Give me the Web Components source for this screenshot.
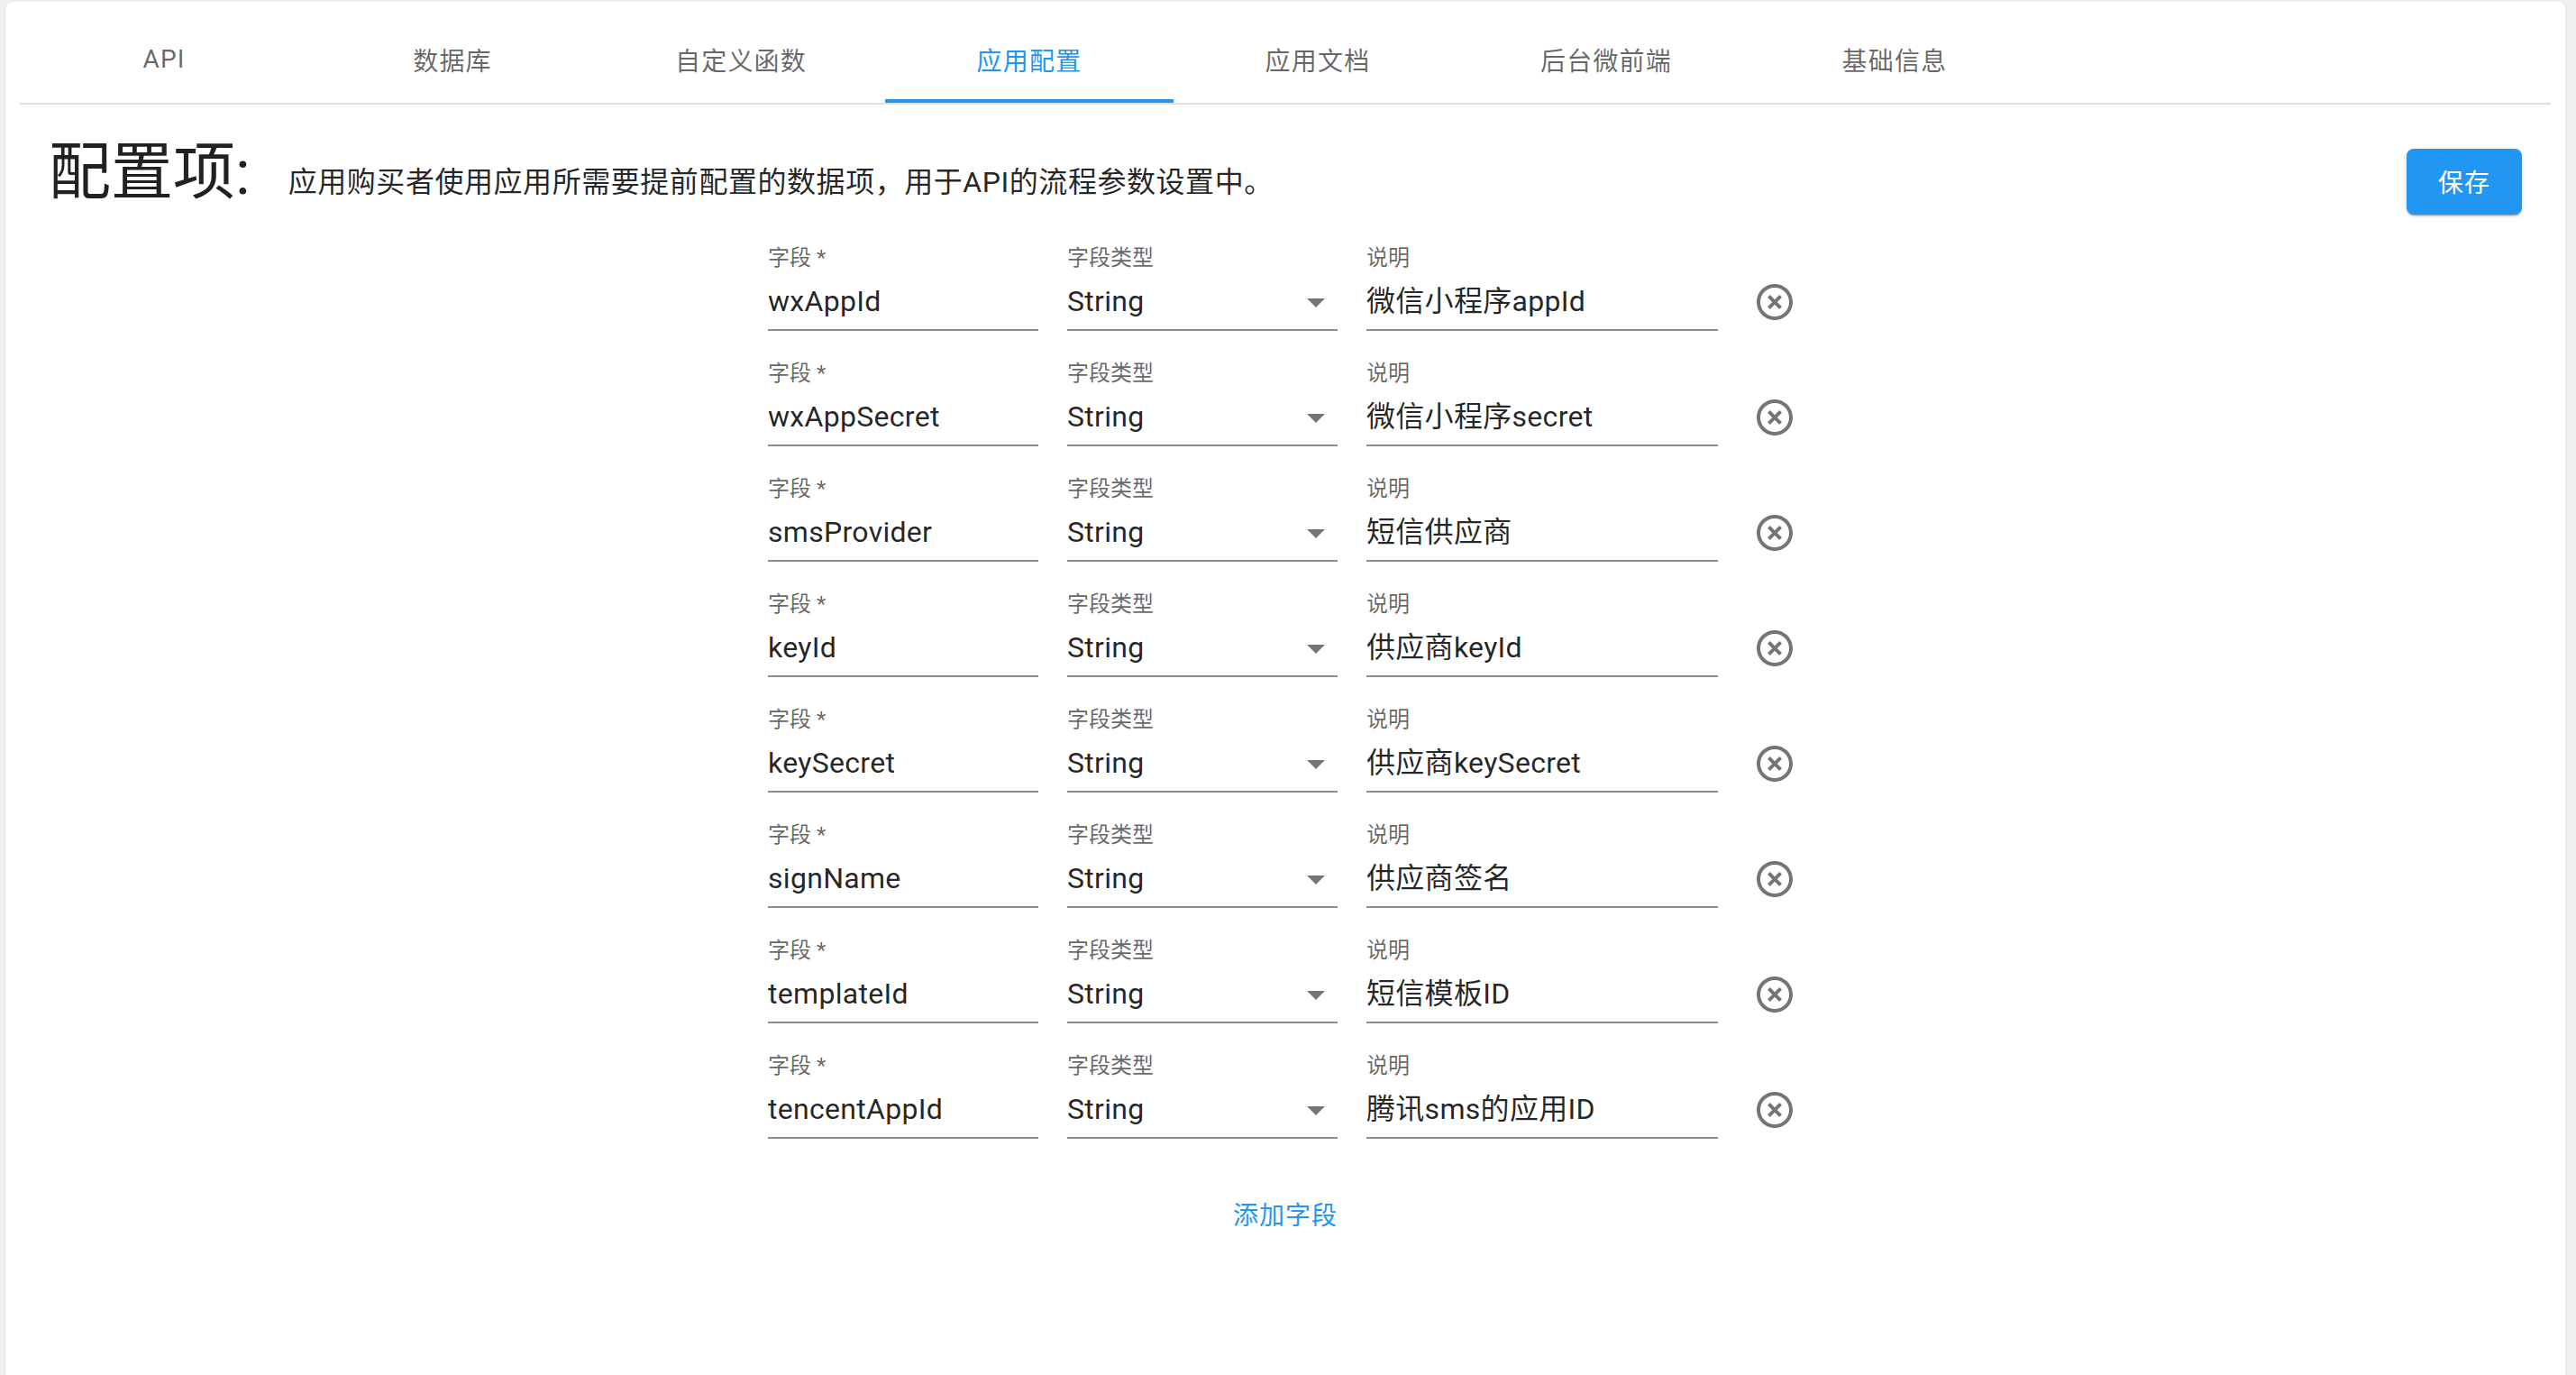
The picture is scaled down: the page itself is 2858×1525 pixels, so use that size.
<!DOCTYPE html>
<html lang="zh">
<head>
<meta charset="utf-8">
<title>应用配置</title>
<style>
  html, body { margin: 0; height: 100%; background: #f0f0f0; }
  body { font-family: Roboto, "Noto Sans CJK SC", sans-serif; }
</style>
</head>
<body>
<app-card>
  <tab-bar>
    <tab-item>API</tab-item>
    <tab-item>数据库</tab-item>
    <tab-item>自定义函数</tab-item>
    <tab-item active>应用配置</tab-item>
    <tab-item>应用文档</tab-item>
    <tab-item>后台微前端</tab-item>
    <tab-item>基础信息</tab-item>
  </tab-bar>
  <config-header>
    <span slot="title">配置项:</span>
    <span slot="desc">应用购买者使用应用所需要提前配置的数据项，用于API的流程参数设置中。</span>
    <save-button slot="action">保存</save-button>
  </config-header>
  <config-form id="form"></config-form>
</app-card>

<script>
// Field rows shown in the form.
const rows = [
  ['wxAppId', '微信小程序appId'],
  ['wxAppSecret', '微信小程序secret'],
  ['smsProvider', '短信供应商'],
  ['keyId', '供应商keyId'],
  ['keySecret', '供应商keySecret'],
  ['signName', '供应商签名'],
  ['templateId', '短信模板ID'],
  ['tencentAppId', '腾讯sms的应用ID']
]

/**
 * Small helper, defines an element with a static shadow template.
 *
 * @param {string} name - Tag name.
 * @param {string} html - Shadow markup.
 */
function define (name, html) {
  const template = document.createElement('template')
  template.innerHTML = html
  customElements.define(name, class extends HTMLElement {
    constructor () {
      super()
      this.attachShadow({ mode: 'open' }).appendChild(template.content.cloneNode(true))
    }
  })
}

define('app-card', `
  <style>
    :host {
      display: block;
      box-sizing: border-box;
      min-height: 1523px;
      margin: 2px 12px 0 6px;
      padding: 0 16px;
      background: #fff;
      border-radius: 8px 8px 0 0;
      box-shadow: 0 1px 3px rgba(0,0,0,0.12);
    }
  </style>
  <slot></slot>
`)

define('tab-bar', `
  <style>
    :host { display: flex; height: 112px; border-bottom: 2px solid #e0e0e0; }
  </style>
  <slot></slot>
`)

define('tab-item', `
  <style>
    :host {
      display: flex;
      box-sizing: border-box;
      width: 320px;
      height: 112px;
      padding: 19px 0 4px;
      align-items: center;
      justify-content: center;
      font-size: 28px;
      letter-spacing: 1.2px;
      color: rgba(0,0,0,0.6);
    }
    :host([active]) { color: #2196f3; border-bottom: 4px solid #2196f3; padding-bottom: 0; }
  </style>
  <slot></slot>
`)

define('config-header', `
  <style>
    :host { display: flex; height: 152px; align-items: flex-start; padding: 0 32px; }
    .title { font-size: 69px; line-height: 100px; margin-top: 26px; color: rgba(0,0,0,0.87); }
    .desc { font-size: 32px; line-height: 48px; letter-spacing: 0.55px; margin: 62px 0 0 42px; color: rgba(0,0,0,0.87); flex: 1; }
    .action { margin-top: 49px; }
  </style>
  <div class="title"><slot name="title"></slot></div>
  <div class="desc"><slot name="desc"></slot></div>
  <div class="action"><slot name="action"></slot></div>
`)

define('save-button', `
  <style>
    :host {
      display: flex;
      box-sizing: border-box;
      width: 128px;
      height: 73px;
      padding-bottom: 2px;
      align-items: center;
      justify-content: center;
      background: #2196f3;
      color: #fff;
      font-size: 28px;
      letter-spacing: 1px;
      border-radius: 8px;
      box-shadow: 0 3px 1px -2px rgba(0,0,0,.2), 0 2px 2px rgba(0,0,0,.14), 0 1px 5px rgba(0,0,0,.12);
    }
  </style>
  <slot></slot>
`)

define('config-form', `
  <style>
    :host { display: block; width: 1148px; margin: 0 auto 0 830px; }
    .add { display: flex; justify-content: flex-end; width: 632px; margin-top: 36px; font-size: 28px; letter-spacing: 1px; line-height: 42px; color: #2196f3; }
  </style>
  <slot></slot>
  <div class="add">添加字段</div>
`)

define('form-field', `
  <style>
    :host { display: block; border-bottom: 2px solid rgba(0,0,0,0.45); height: 97px; }
    .label { font-size: 24px; line-height: 36px; color: rgba(0,0,0,0.6); }
    .value {
      display: flex;
      align-items: center;
      justify-content: space-between;
      height: 48px;
      margin-top: 6px;
      font-size: 32px;
      line-height: 48px;
      letter-spacing: 0.3px;
      color: rgba(0,0,0,0.87);
    }
    ::slotted(svg) { display: block; width: 48px; height: 48px; fill: rgba(0,0,0,0.54); margin-top: 2px; }
  </style>
  <div class="label"><slot name="label"></slot></div>
  <div class="value"><slot></slot><slot name="end"></slot></div>
`)

define('config-row', `
  <style>
    :host { display: grid; grid-template-columns: 300px 300px 390px 48px; column-gap: 32px; height: 128px; }
    .icon { display: block; width: 48px; height: 48px; margin: 43px 0 0 7px; fill: rgba(0,0,0,0.54); }
  </style>
  <slot></slot>
  <svg class="icon" viewBox="0 0 24 24"><path d="M14.59 8L12 10.59 9.41 8 8 9.41 10.59 12 8 14.59 9.41 16 12 13.41 14.59 16 16 14.59 13.41 12 16 9.41 14.59 8zM12 2C6.47 2 2 6.47 2 12s4.47 10 10 10 10-4.47 10-10S17.53 2 12 2zm0 18c-4.41 0-8-3.59-8-8s3.59-8 8-8 8 3.59 8 8-3.59 8-8 8z"/></svg>
`)

// Fill the form from the rows above.
const form = document.getElementById('form')
for (const [name, note] of rows) {
  const row = document.createElement('config-row')
  row.innerHTML = `
    <form-field><span slot="label">字段 *</span>${name}</form-field>
    <form-field><span slot="label">字段类型</span>String<svg slot="end" viewBox="0 0 24 24"><path d="M7 10l5 5 5-5z"/></svg></form-field>
    <form-field><span slot="label">说明</span>${note}</form-field>
  `
  form.appendChild(row)
}
</script>
</body>
</html>
